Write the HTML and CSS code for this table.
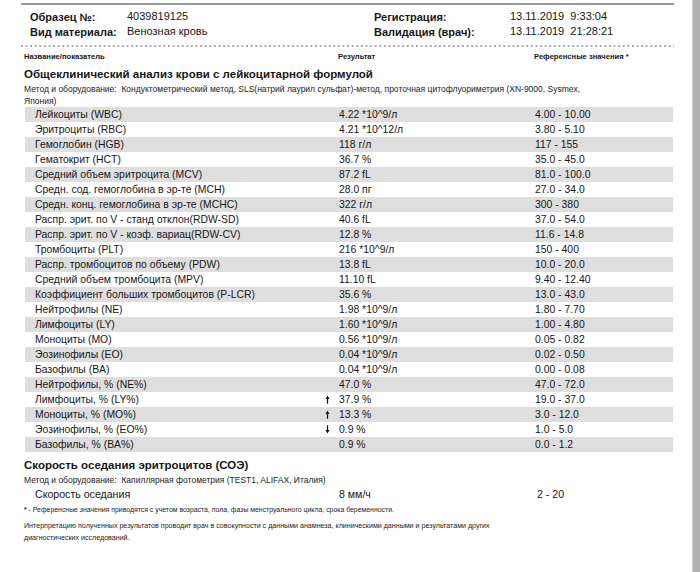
FILE: index.html
```html
<!DOCTYPE html>
<html lang="ru">
<head>
<meta charset="utf-8">
<title>Результаты анализа</title>
<link rel="stylesheet" href="styles.css">
</head>
<body>
<div class="page">
  <div class="topline"></div>
  <div class="meta">
    <div class="meta-label">Образец №:</div>
    <div class="meta-value">4039819125</div>
    <div class="meta-label">Регистрация:</div>
    <div class="meta-value">13.11.2019&nbsp;&nbsp;9:33:04</div>
    <div class="meta-label">Вид материала:</div>
    <div class="meta-value">Венозная кровь</div>
    <div class="meta-label">Валидация (врач):</div>
    <div class="meta-value">13.11.2019&nbsp;&nbsp;21:28:21</div>
  </div>
  <div class="dots"></div>
  <div class="colhead">
    <div>Название/показатель</div>
    <div>Результат</div>
    <div>Референсные значения *</div>
  </div>
  <h2 class="section-title">Общеклинический анализ крови с лейкоцитарной формулой</h2>
  <p class="method">Метод и оборудование:&nbsp; Кондуктометрический метод, SLS(натрий лаурил сульфат)-метод, проточная цитофлуориметрия (XN-9000, Sysmex,<br>Япония)</p>
  <div class="results">
    <div class="row"><div class="name">Лейкоциты (WBC)</div><div class="flag"></div><div class="val">4.22 *10^9/л</div><div class="ref">4.00 - 10.00</div></div>
    <div class="row"><div class="name">Эритроциты (RBC)</div><div class="flag"></div><div class="val">4.21 *10^12/л</div><div class="ref">3.80 - 5.10</div></div>
    <div class="row"><div class="name">Гемоглобин (HGB)</div><div class="flag"></div><div class="val">118 г/л</div><div class="ref">117 - 155</div></div>
    <div class="row"><div class="name">Гематокрит (HCT)</div><div class="flag"></div><div class="val">36.7 %</div><div class="ref">35.0 - 45.0</div></div>
    <div class="row"><div class="name">Средний объем эритроцита (MCV)</div><div class="flag"></div><div class="val">87.2 fL</div><div class="ref">81.0 - 100.0</div></div>
    <div class="row"><div class="name">Средн. сод. гемоглобина в эр-те (MCH)</div><div class="flag"></div><div class="val">28.0 пг</div><div class="ref">27.0 - 34.0</div></div>
    <div class="row"><div class="name">Средн. конц. гемоглобина в эр-те (MCHC)</div><div class="flag"></div><div class="val">322 г/л</div><div class="ref">300 - 380</div></div>
    <div class="row"><div class="name">Распр. эрит. по V - станд отклон(RDW-SD)</div><div class="flag"></div><div class="val">40.6 fL</div><div class="ref">37.0 - 54.0</div></div>
    <div class="row"><div class="name">Распр. эрит. по V - коэф. вариац(RDW-CV)</div><div class="flag"></div><div class="val">12.8 %</div><div class="ref">11.6 - 14.8</div></div>
    <div class="row"><div class="name">Тромбоциты (PLT)</div><div class="flag"></div><div class="val">216 *10^9/л</div><div class="ref">150 - 400</div></div>
    <div class="row"><div class="name">Распр. тромбоцитов по объему (PDW)</div><div class="flag"></div><div class="val">13.8 fL</div><div class="ref">10.0 - 20.0</div></div>
    <div class="row"><div class="name">Средний объем тромбоцита (MPV)</div><div class="flag"></div><div class="val">11.10 fL</div><div class="ref">9.40 - 12.40</div></div>
    <div class="row"><div class="name">Коэффициент больших тромбоцитов (P-LCR)</div><div class="flag"></div><div class="val">35.6 %</div><div class="ref">13.0 - 43.0</div></div>
    <div class="row"><div class="name">Нейтрофилы (NE)</div><div class="flag"></div><div class="val">1.98 *10^9/л</div><div class="ref">1.80 - 7.70</div></div>
    <div class="row"><div class="name">Лимфоциты (LY)</div><div class="flag"></div><div class="val">1.60 *10^9/л</div><div class="ref">1.00 - 4.80</div></div>
    <div class="row"><div class="name">Моноциты (MO)</div><div class="flag"></div><div class="val">0.56 *10^9/л</div><div class="ref">0.05 - 0.82</div></div>
    <div class="row"><div class="name">Эозинофилы (EO)</div><div class="flag"></div><div class="val">0.04 *10^9/л</div><div class="ref">0.02 - 0.50</div></div>
    <div class="row"><div class="name">Базофилы (BA)</div><div class="flag"></div><div class="val">0.04 *10^9/л</div><div class="ref">0.00 - 0.08</div></div>
    <div class="row"><div class="name">Нейтрофилы, % (NE%)</div><div class="flag"></div><div class="val">47.0 %</div><div class="ref">47.0 - 72.0</div></div>
    <div class="row"><div class="name">Лимфоциты, % (LY%)</div><div class="flag"><svg class="arrow" viewBox="0 0 6 10" width="5" height="9"><path d="M3 0.3 L5.4 4.4 H3.75 V10 H2.25 V4.4 H0.6 Z"/></svg></div><div class="val">37.9 %</div><div class="ref">19.0 - 37.0</div></div>
    <div class="row"><div class="name">Моноциты, % (MO%)</div><div class="flag"><svg class="arrow" viewBox="0 0 6 10" width="5" height="9"><path d="M3 0.3 L5.4 4.4 H3.75 V10 H2.25 V4.4 H0.6 Z"/></svg></div><div class="val">13.3 %</div><div class="ref">3.0 - 12.0</div></div>
    <div class="row"><div class="name">Эозинофилы, % (EO%)</div><div class="flag"><svg class="arrow" viewBox="0 0 6 10" width="5" height="9"><path d="M3 9.7 L5.4 5.6 H3.75 V0 H2.25 V5.6 H0.6 Z"/></svg></div><div class="val">0.9 %</div><div class="ref">1.0 - 5.0</div></div>
    <div class="row"><div class="name">Базофилы, % (BA%)</div><div class="flag"></div><div class="val">0.9 %</div><div class="ref">0.0 - 1.2</div></div>
  </div>
  <h2 class="section-title second">Скорость оседания эритроцитов (СОЭ)</h2>
  <p class="method single">Метод и оборудование:&nbsp; Капиллярная фотометрия (TEST1, ALIFAX, Италия)</p>
  <div class="row plain"><div class="name">Скорость оседания</div><div class="flag"></div><div class="val">8 мм/ч</div><div class="ref">2 - 20</div></div>
  <p class="footnote"><b>*</b> - Референсные значения приводятся с учетом возраста, пола, фазы менструального цикла, срока беременности.</p>
  <p class="interp">Интерпретацию полученных результатов проводит врач в совокупности с данными анамнеза, клиническими данными и результатами других<br>диагностических исследований.</p>
</div>
<div class="sidebar"></div>
</body>
</html>
```
FILE: styles.css
```css
html, body {
  margin: 0;
  padding: 0;
  height: 100%;
}
body {
  display: flex;
  background: #ffffff;
  font-family: "Liberation Sans", Arial, sans-serif;
  color: #161616;
  overflow: hidden;
}
.page {
  flex: 1;
  min-width: 0;
}
.sidebar {
  width: 7px;
  background: #b1b1b1;
  border-left: 1px solid #cfcfcf;
}
.topline {
  margin: 3px 0 0 21px;
  width: 653px;
  height: 2px;
  background: #9a9a9a;
}
.meta {
  display: grid;
  grid-template-columns: 97px 247px 136px auto;
  margin: 5px 0 0 30px;
  font-size: 11px;
  line-height: 15px;
}
.meta-label {
  font-weight: bold;
}
.meta-value {
  position: relative;
  top: -1px;
}
.dots {
  margin: 5px 0 0 21px;
  width: 653px;
  height: 2px;
  background-image: linear-gradient(to right, #a8a8a8 0, #a8a8a8 1.6px, transparent 1.6px);
  background-size: 4.6px 2px;
  background-repeat: repeat-x;
}
.colhead {
  display: grid;
  grid-template-columns: 314px 196px 1fr;
  margin: 5px 0 0 24px;
  font-size: 7.6px;
  font-weight: bold;
  line-height: 10px;
}
.section-title {
  margin: 4px 0 0 24px;
  font-size: 11.5px;
  font-weight: bold;
  line-height: 16px;
}
.section-title.second {
  margin-top: 5px;
}
.method {
  margin: 1px 0 0 24px;
  font-size: 8.5px;
  line-height: 12px;
  color: #222;
}
.method.single {
  margin-top: 1px;
}
.results {
  margin-left: 25px;
  width: 648px;
}
.row {
  display: grid;
  grid-template-columns: 297px 10px 203px 1fr;
  height: 15px;
  align-items: center;
  font-size: 10.4px;
  line-height: 15px;
}
.results .row:nth-child(odd) {
  background: #dedede;
}
.name {
  padding-left: 10px;
  white-space: nowrap;
}
.flag {
  display: flex;
  align-items: center;
  justify-content: center;
}
.arrow {
  display: block;
  fill: #111;
}
.val {
  padding-left: 7px;
}
.row.plain {
  margin: 1px 0 0 25px;
  width: 648px;
  font-size: 10.6px;
}
.row.plain .ref {
  padding-left: 2px;
}
.footnote {
  margin: 3px 0 0 24px;
  font-size: 6.9px;
  line-height: 10px;
  color: #222;
}
.interp {
  margin: 5px 0 0 24px;
  font-size: 7.1px;
  line-height: 12px;
  color: #222;
}
```
